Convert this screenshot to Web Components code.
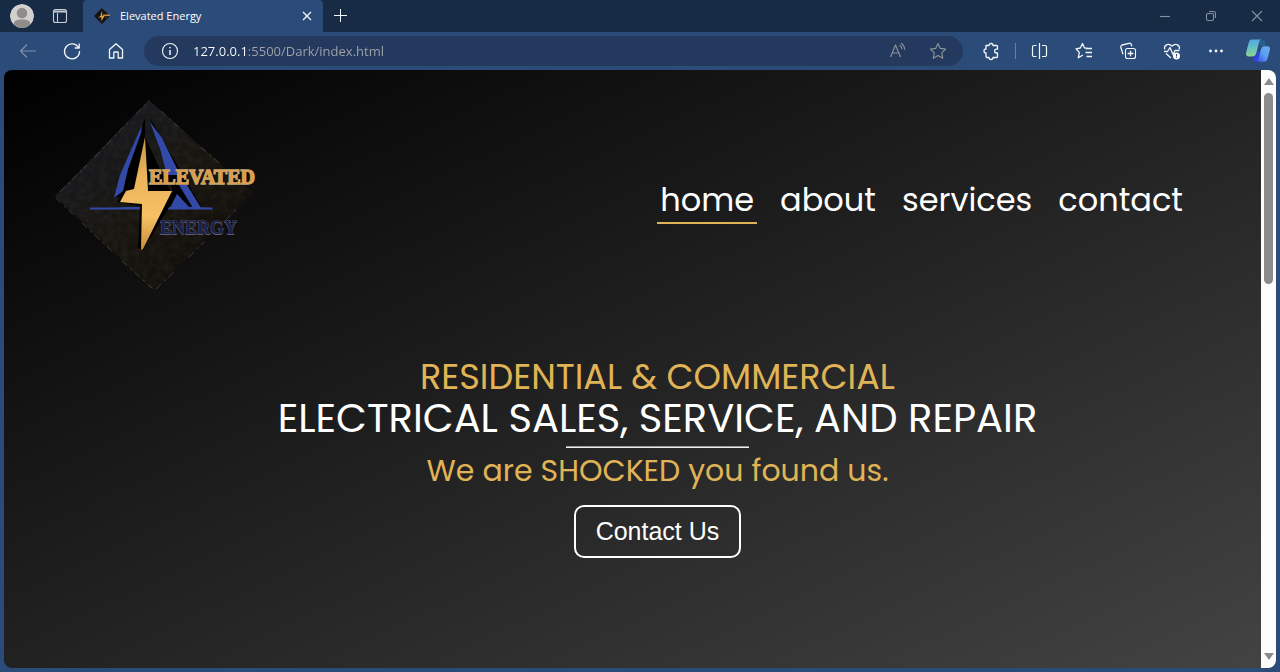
<!DOCTYPE html>
<html lang="en">
<head>
<meta charset="utf-8">
<meta name="viewport" content="width=device-width, initial-scale=1">
<title>Elevated Energy</title>
<style>
html, body { height: 100%; }
body { margin: 0; background: #2b4b78; font-family: "Open Sans", sans-serif; overflow: hidden; }
</style>
</head>
<body>
<browser-window>
  <title-bar slot="title"></title-bar>
  <tool-bar slot="tools"></tool-bar>
  <site-page>
    <site-header slot="header">
      <nav-link href="#home" current>home</nav-link>
      <nav-link href="#about">about</nav-link>
      <nav-link href="#services">services</nav-link>
      <nav-link href="#contact">contact</nav-link>
    </site-header>
    <site-hero>
      <span slot="kicker">RESIDENTIAL &amp; COMMERCIAL</span>
      <span slot="headline">ELECTRICAL SALES, SERVICE, AND REPAIR</span>
      <span slot="tagline">We are SHOCKED you found us.</span>
      <span slot="action">Contact Us</span>
    </site-hero>
  </site-page>
</browser-window>

<script>
function define(name, html, setup) {
  const template = document.createElement('template');
  template.innerHTML = html;
  customElements.define(name, class extends HTMLElement {
    constructor() {
      super();
      this.attachShadow({ mode: 'open' }).append(template.content.cloneNode(true));
    }
    connectedCallback() { if (setup) setup(this, this.shadowRoot); }
  });
}

/* All line icons share a 20 x 20 grid. */
const ICONS = {
  profile: '<defs><clipPath id="c"><circle cx="10" cy="10" r="10"/></clipPath></defs><g stroke="none" clip-path="url(#c)"><circle cx="10" cy="10" r="10" fill="#d2d0ce"/><circle cx="10" cy="7.6" r="4.4" fill="#8f8d8c"/><path d="M3 17c0-3 3-4 7-4s7 1 7 4l-2 3H5z" fill="#8f8d8c"/></g>',
  tabs: '<rect x="3.5" y="3.5" width="13" height="13" rx="2"/><path d="M3.5 6h13M3.5 5h13M7.5 7v9"/>',
  logo: '<g stroke="none"><path d="M9.8 2 18 10l-8 8-8-8z" fill="#17130f"/><path d="M10 4.5 8.6 9.8l-2 1.4h2.7L9.5 15l3-5h-2.2z" fill="#e5a83f"/><path d="M11 8.5h7v1.600h-7z" fill="#c08b3e"/><path d="M6 11.500h2M13 11.500h2" stroke="#32437c"/></g>',
  close: '<path d="m6 6 8 8m0-8-8 8" stroke-width="1.300"/>',
  plus: '<path d="M9.500 3v13M3 9.500h13" stroke-width="1"/>',
  min: '<path d="M5 10.500h10"/>',
  restore: '<rect x="5.500" y="7.500" width="7" height="7" rx="1.500"/><path d="M8 5.500h4.500a2 2 0 0 1 2 2V12"/>',
  quit: '<path d="m5 5 10 10m0-10L5 15"/>',
  back: '<path d="M18 10H2.500M9 3.500 2.500 10 9 16.500"/>',
  reload: '<path d="M16.700 7A7.500 7.500 0 1 0 17.500 10M17.200 2.500V7h-4.500" stroke-width="1.300"/>',
  home: '<path d="m3.500 8.500 6.500-5.800 6.500 5.800v8.500h-4.300v-5.200a.8.8 0 0 0-.8-.8H8.600a.8.8 0 0 0-.8.8V17H3.500z" stroke-width="1.300"/>',
  info: '<circle cx="10" cy="10" r="7.500"/><path d="M10 9v5M10 6v1.300" stroke-width="1.500"/>',
  read: '<path d="m2.500 16 5-12 5 12M4.300 12h6.500M11.500 4.200a5 5 0 0 1 2.500 4M13 2.300a8 8 0 0 1 3.700 6.400"/>',
  star: '<path d="m10 2.500 2.300 4.900 5.300.7-3.900 3.700 1 5.400-4.700-2.600-4.700 2.600 1-5.400-3.900-3.700 5.300-.7z"/>',
  puzzle: '<path d="M5 4.500h3a2 2 0 1 1 4 0h3.500a1 1 0 0 1 1 1v2.700h-1a1.900 1.900 0 0 0 0 3.800h1v3.500a1 1 0 0 1-1 1H12a2 2 0 0 1-4 0H6a1 1 0 0 1-1-1V12a2 2 0 1 1 0-4z" stroke-width="1.300"/>',
  split: '<path d="M9.500 2v16M6.500 4.500H4a1.500 1.500 0 0 0-1.500 1.500v8A1.500 1.500 0 0 0 4 15.500h2.500M12 4.500h3A1.500 1.500 0 0 1 16.500 6v8a1.500 1.500 0 0 1-1.500 1.500h-3" stroke-width="1.200"/>',
  favs: '<path d="M13.500 7.200 10.400 6.800 8.500 2.500 6.300 7 2 7.800l3.300 3.600-1 5.400L9 14M11.500 7.500H18M11.500 11.500H18M12.500 15.500H18" stroke-width="1.300"/>',
  collect: '<rect x="7.500" y="7.500" width="10" height="10" rx="2"/><path d="M12.500 9.700v5.600M9.700 12.500h5.600M5 13.200 2.800 6.300A2 2 0 0 1 4 4l7-1.700a2 2 0 0 1 2.400 1.400l.5 1.500" stroke-width="1.300"/>',
  heart: '<path d="M2.800 8.200C1.500 4.500 6 1.300 10 5c4-3.700 8.500-.5 7.200 3.200M2 10.500h3.500L8 6.500l3 7 2-4h4.500M4 12.500l5 4.500" stroke-width="1.300"/><circle cx="14.500" cy="15" r="3.500" fill="#fff" stroke="none"/><path d="M14.500 13v2.500M14.500 16.300v.8" stroke="#2b4b78"/>',
  dots: '<g fill="currentColor" stroke="none"><circle cx="4.500" cy="10" r="1.400"/><circle cx="10" cy="10" r="1.400"/><circle cx="15.500" cy="10" r="1.400"/></g>',
  copilot: '<defs><linearGradient id="a" x1="0" y1="0" x2="0" y2="1"><stop stop-color="#54a7e0"/><stop offset=".5" stop-color="#68c0c4"/><stop offset="1" stop-color="#8ed58b"/></linearGradient><linearGradient id="b" x1="0" y1="1" x2="1" y2="0"><stop stop-color="#3442e0"/><stop offset=".5" stop-color="#5a9cf2"/><stop offset="1" stop-color="#6dafee"/></linearGradient></defs><g stroke="none"><path d="M11 1h3c1.500 0 2 1 2.400 2.500l.8 2.500H13l-2-1z" fill="#285f8d"/><path d="M5 .5h8c-1.200 0-1.800 1-2.200 2.500L8.700 11.500c-.5 2-1.500 3-3.200 3H2.200C.2 14.500-.3 13 .2 11L2.300 3C2.700 1.500 3.500.5 5 .5z" fill="url(#a)"/><path d="M15 19H8c1.200 0 1.800-1 2.200-2.500L12.500 8.500c.4-1.700 1.200-2.500 3-2.500h2.500c1.800 0 2.200 1.500 1.800 3.300L18 16c-.5 2-1.200 3-3 3z" fill="url(#b)"/><path d="M5.500 14.500c1.500 0 2.800-.8 3.300-2.500l.5-1.700h2.500L10.200 16.500c-.5 1.700-1 2.500-2.200 2.500-1.500 0-1.500-1.500-2.500-4.500z" fill="#3045d8"/></g>'
};

define('line-icon', `
<style>
:host { display: block; flex: none; width: 20px; height: 20px; }
:host([large]) { width: 24px; height: 24px; }
svg { display: block; width: 100%; height: 100%; }
</style>
<svg viewBox="0 0 20 20" fill="none" stroke="currentColor" stroke-width="1.100" stroke-linejoin="round" aria-hidden="true"></svg>`,
(host, root) => { root.querySelector('svg').innerHTML = ICONS[host.getAttribute('name')]; });

define('icon-button', `
<style>
:host { display: block; flex: none; width: 44px; color: #f4f7fa; }
button { display: flex; align-items: center; justify-content: center; width: 100%; height: 30px; padding: 0; border: 0; background: none; color: inherit; }
</style>
<button type="button"><line-icon></line-icon></button>`,
(host, root) => {
  const icon = root.querySelector('line-icon');
  const next = document.createElement('line-icon');
  next.setAttribute('name', host.getAttribute('name'));
  if (host.hasAttribute('large')) next.setAttribute('large', '');
  icon.replaceWith(next);
  root.querySelector('button').setAttribute('aria-label', host.getAttribute('label'));
});

define('browser-window', `
<style>
:host { display: flex; flex-direction: column; height: 100vh; background: #2b4b78; }
main { flex: 1; min-height: 0; display: flex; margin: 0 4px 4px; border-radius: 8px; overflow: hidden; }
::slotted(site-page) { flex: 1; min-width: 0; }
</style>
<slot name="title"></slot>
<slot name="tools"></slot>
<main><slot></slot><scroll-bar></scroll-bar></main>`);

define('title-bar', `
<style>
:host { display: flex; align-items: stretch; height: 32px; background: #182b44; color: #fff; }
.start { display: flex; align-items: center; width: 83px; box-sizing: border-box; }
.start icon-button + icon-button { width: 32px; color: #c8ced6; }
.tab { display: flex; align-items: center; gap: 8px; width: 240px; box-sizing: border-box; padding-left: 9px; background: #2b4b78; border-radius: 4px 4px 0 0; font-size: 11px; line-height: 16px; }
.tab span { flex: 1; white-space: nowrap; }
.tab icon-button { width: 32px; }
.window { display: flex; align-items: center; margin-left: auto; }
.window icon-button { width: 46px; color: #8792a0; }
.plus { display: flex; align-items: center; }
.plus icon-button { width: 36px; }
</style>
<div class="start"><icon-button name="profile" label="Profile" large></icon-button><icon-button name="tabs" label="Tab actions"></icon-button></div>
<div class="tab"><line-icon name="logo"></line-icon><span>Elevated Energy</span><icon-button name="close" label="Close tab"></icon-button></div>
<div class="plus"><icon-button name="plus" label="New tab"></icon-button></div>
<div class="window"><icon-button name="min" label="Minimize"></icon-button><icon-button name="restore" label="Restore"></icon-button><icon-button name="quit" label="Close window"></icon-button></div>`);

define('tool-bar', `
<style>
:host { display: flex; align-items: center; height: 38px; padding: 0 2px 0 6px; }
.off { color: #7f92ae; }
.rule { width: 1px; height: 16px; margin: 0 2px; background: #6880a2; }
address-bar { flex: 1; margin: 0 6px; }
.copilot { width: 40px; }
</style>
<icon-button class="off" name="back" label="Back"></icon-button>
<icon-button name="reload" label="Refresh"></icon-button>
<icon-button name="home" label="Home"></icon-button>
<address-bar></address-bar>
<icon-button name="puzzle" label="Extensions"></icon-button>
<span class="rule"></span>
<icon-button name="split" label="Split screen"></icon-button>
<icon-button name="favs" label="Favorites"></icon-button>
<icon-button name="collect" label="Collections"></icon-button>
<icon-button name="heart" label="Browser essentials"></icon-button>
<icon-button name="dots" label="Settings and more"></icon-button>
<icon-button class="copilot" name="copilot" label="Copilot" large></icon-button>`);

define('address-bar', `
<style>
:host { display: flex; align-items: center; height: 30px; padding: 0 5px 0 4px; box-sizing: border-box; border-radius: 15px; background: #233a5e; }
input { flex: 1; min-width: 0; height: 30px; padding: 0 0 0 1px; border: 0; outline: 0; font: 13px/20px "Open Sans", sans-serif; color: transparent;
  background: linear-gradient(to right, #fff 56px, #a2a4aa 56px); -webkit-background-clip: text; background-clip: text; }
icon-button.dim { width: 40px; color: #92949b; }
</style>
<icon-button name="info" label="Site information"></icon-button>
<input type="text" aria-label="Address" value="127.0.0.1:5500/Dark/index.html" spellcheck="false">
<icon-button class="dim" name="read" label="Read aloud"></icon-button>
<icon-button class="dim" name="star" label="Add to favorites"></icon-button>`);

define('scroll-bar', `
<style>
:host { display: flex; flex-direction: column; align-items: center; flex: none; width: 15px; padding: 8px 0; box-sizing: border-box; background: #fcfcfc; }
i { width: 0; height: 0; border: 5px solid transparent; }
.up { border-top: 0; border-bottom: 7px solid #8b8b8b; }
.down { border-bottom: 0; border-top: 7px solid #8b8b8b; }
.track { flex: 1; width: 9px; margin: 8px 0; }
.thumb { height: 34.6%; border-radius: 5px; background: #8b8b8b; }
</style>
<i class="up"></i><div class="track"><div class="thumb"></div></div><i class="down"></i>`);

define('site-page', `
<style>
:host { display: block; background: linear-gradient(to bottom right, #000, #434343); color: #fff; font-family: Poppins, Inter, sans-serif; }
</style>
<slot name="header"></slot>
<slot></slot>`);

define('site-header', `
<style>
:host { display: flex; align-items: center; justify-content: space-between; padding: 20px 75px 0 36px; }
nav { display: flex; gap: 20px; margin-top: 12px; }
</style>
<brand-logo></brand-logo>
<nav><slot></slot></nav>`);

define('nav-link', `
<style>
:host { display: block; }
a { display: block; padding: 0 3px; border-bottom: 2px solid transparent; color: #fff; text-decoration: none; font-size: 32px; line-height: 44px; }
:host([current]) a { border-color: #e0b456; }
</style>
<a><slot></slot></a>`,
(host, root) => { root.querySelector('a').href = host.getAttribute('href'); });

define('brand-logo', `
<style>
:host { display: block; flex: none; }
svg { display: block; width: 230px; height: 210px; }
text { font-family: "Liberation Serif", serif; font-weight: 700; }
</style>
<svg viewBox="40 90 230 210" role="img" aria-label="Elevated Energy">
  <defs>
    <linearGradient id="plate" x1="0" y1="0" x2="1" y2="1"><stop offset=".2" stop-color="#17191e"/><stop offset=".5" stop-color="#191611"/><stop offset="1" stop-color="#0e0b08"/></linearGradient>
    <linearGradient id="bolt" x1="0" y1="0" x2="0" y2="1"><stop stop-color="#c99448"/><stop offset=".35" stop-color="#edb45a"/><stop offset=".7" stop-color="#f6c064"/><stop offset="1" stop-color="#c98c3c"/></linearGradient>
    <filter id="soft"><feGaussianBlur stdDeviation=".6"/></filter>
    <filter id="grain" x="0" y="0" width="1" height="1"><feTurbulence type="fractalNoise" baseFrequency=".14" numOctaves="4"/><feColorMatrix values="0 0 0 0 .3  0 0 0 0 .27  0 0 0 0 .22  .3 0 0 0 -.1"/><feComposite in2="SourceGraphic" operator="in"/></filter>
  </defs>
  <path d="m149 100 104 93-99 98-99-95z" fill="url(#plate)"/>
  <path d="m149 100 104 93-99 98-99-95z" filter="url(#grain)" opacity=".5"/>
  <path d="m60 192 27-27m8-8 34-36m7-7 13-13m12 10 22 20m18 16 18 16M56 198l21 20m5 5 33 31m7 7 32 29m2-1 19-18m14-14 15-15m22-22 10-10" fill="none" stroke="#5f5c55" stroke-width=".6" stroke-dasharray="7 4 3 3"/>
  <g filter="url(#soft)">
    <path d="M145 118 114 198l11-2 20-58zM150 118l51 88h-36l8-14z" fill="#060606"/>
    <path d="m142 125-22 50-6 23 9-7 5-22 13-36zM150 122l12 16 18 37h-13l-7-26zM179 185h8l14 23h-8zM170 208l7-14 13 14zM90 207.500h27l8-.5h65l22 .5 1 2H90z" fill="#3349a8"/>
    <path d="m145 137-20 51-8 14 23 4-2 42 5 2 31-51z" fill="#050505"/>
    <path d="m145 137-11 52-8 2-6 11 22 2-1 46 2-1 29-58h-24z" fill="url(#bolt)"/>
  </g>
  <text x="149" y="184" font-size="20" fill="#dc9f49" stroke="#c9a97a" stroke-width="1.400" paint-order="stroke">ELEVATED</text>
  <text x="160" y="235" font-size="18" fill="#7c7380">ENERGY</text>
  <text x="160" y="234" font-size="18" fill="#171f4d" stroke="#4a4a68" stroke-width=".8" paint-order="stroke" aria-hidden="true">ENERGY</text>
</svg>`);

define('site-hero', `
<style>
:host { display: flex; flex-direction: column; align-items: center; padding: 56px 16px 0 66px; text-align: center; }
h1, p { margin: 0; font-weight: 400; }
.gold { color: #e0b456; }
.kicker { font-size: 35px; line-height: 42px; }
h1 { font-size: 40px; line-height: 40px; }
hr { width: 183px; height: 0; margin: 8px 0 0; border: solid; border-width: 1px 0; border-color: #9a9a9a transparent #eee; }
.tagline { font-size: 30px; line-height: 46px; }
button { margin-top: 11px; padding: 0 20px 2px; height: 53px; border: 2px solid #fff; border-radius: 10px; background: none; color: #fff; font: 25px/28px "Liberation Sans", sans-serif; }
</style>
<p class="kicker gold"><slot name="kicker"></slot></p>
<h1><slot name="headline"></slot></h1>
<hr>
<p class="tagline gold"><slot name="tagline"></slot></p>
<button type="button"><slot name="action"></slot></button>`);
</script>
</body>
</html>
